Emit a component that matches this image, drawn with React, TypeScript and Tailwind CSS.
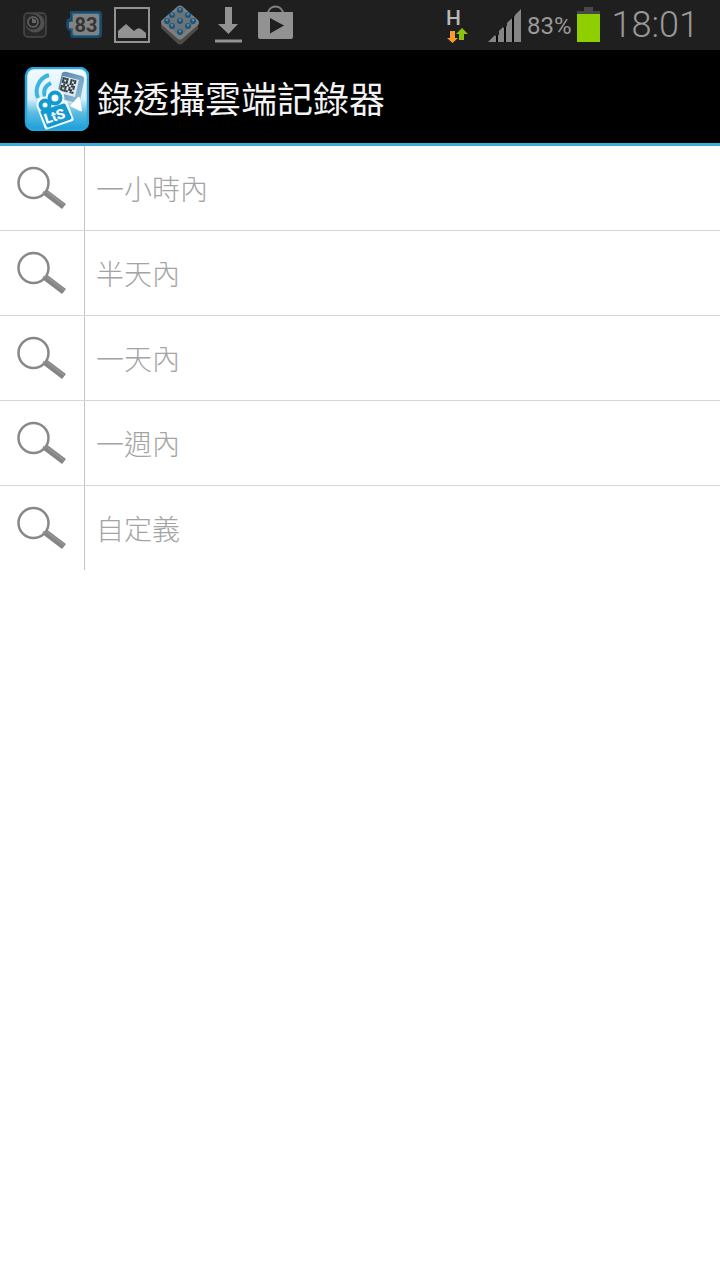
const ranges = ["一小時內", "半天內", "一天內", "一週內", "自定義"];

export default function App() {
  return (
    <div className="min-h-screen bg-white font-['Roboto','Noto_Sans_CJK_TC',sans-serif]">
      <StatusBar />
      <header className="flex h-24 items-center gap-2 border-b-3 border-[#3eaed8] bg-black pt-1 pl-6">
        <AppLogo />
        <h1 className="pt-1 text-4xl text-[#f3f3f3]">錄透攝雲端記錄器</h1>
      </header>
      <ul className="divide-y divide-[#d6d6d6]">
        {ranges.map((range) => (
          <li key={range}>
            <button type="button" className="flex h-[84px] w-full text-left">
              <span className="flex w-[85px] items-center border-r border-[#c4c4c4] pl-4">
                <SearchIcon />
              </span>
              <span className="self-center pt-1.5 pl-[11px] text-[28px] leading-10 font-light text-[#a4a4a4]">
                {range}
              </span>
            </button>
          </li>
        ))}
      </ul>
    </div>
  );
}

function StatusBar() {
  return (
    <div className="flex h-[50px] items-center justify-between bg-[#1f1f1f] pr-[21px] pl-5 text-[#999999]">
      <div className="flex items-center gap-2">
        <CameraIcon />
        <BatteryBadge />
        <PictureIcon />
        <TilesIcon />
        <DownloadIcon />
        <StoreIcon />
      </div>
      <div className="flex items-center">
        <NetworkIcon />
        <SignalIcon />
        <span className="ml-1 pt-0.5 text-2xl">83%</span>
        <BatteryIcon />
        <span className="ml-3 text-4xl font-light">18:01</span>
      </div>
    </div>
  );
}

function CameraIcon() {
  return (
    <svg width="36" height="40" viewBox="0 0 36 40" fill="none">
      <rect x="4" y="8" width="22" height="24" rx="4" fill="#282828" stroke="#4a4a4a" strokeWidth="1.5" />
      <circle cx="15" cy="18" r="9.5" fill="#505050" />
      <circle cx="13" cy="17" r="7.5" fill="#242424" />
      <circle cx="13" cy="17" r="5" fill="#262626" stroke="#5c5c5c" strokeWidth="2" />
      <path d="M12 13v5h4v-3z" fill="#686868" />
    </svg>
  );
}

function BatteryBadge() {
  return (
    <svg width="40" height="40" viewBox="0 0 40 40">
      <path d="M6 6h29q3 0 3 3v20q0 4-4 4H9q-3 0-3-4v-3Q2 25 2 19t4-6z" fill="#174b68" />
      <path d="M8 8h26q2 0 2 2v18q0 3-3 3H10q-2 0-2-3v-3Q5 25 5 20q0-4 3-4z" fill="#286887" />
      <path d="M11 9h22q2 0 2 2v17q0 2-2 2H12q-3 0-3-2v-5H5v-6h4v-6q0-2 2-2z" fill="#838383" />
      <text x="22" y="27" textAnchor="middle" fontSize="20" fontWeight="700" fill="#353535">
        83
      </text>
    </svg>
  );
}

function PictureIcon() {
  return (
    <svg width="40" height="40" viewBox="0 0 40 40">
      <rect x="3" y="3" width="34" height="34" fill="none" stroke="#929292" strokeWidth="2" />
      <path d="M6 33v-7l8-7 8 7q4-4 7-2l5 4v5z" fill="#929292" />
    </svg>
  );
}

const tileDots = [
  [20, 5], [12, 10], [28, 10], [7, 16], [33, 16],
  [12, 21], [28, 21], [20, 27], [20, 16],
];

function TilesIcon() {
  return (
    <svg width="40" height="40" viewBox="0 0 40 40">
      <path d="M1 18v5l17 16q2 1 4 0l16-15v-6z" fill="#4e4a47" />
      <path d="M18 1q2-1 4 0l16 14q2 3 0 5L22 34q-2 1-4 0L2 20q-2-3 0-5z" fill="#7b7f82" />
      <path d="M20 3L4 17l16 14 16-14z" fill="#6b7379" />
      {tileDots.map(([cx, cy]) => (
        <g key={`${cx}-${cy}`}>
          <circle cx={cx} cy={cy} r="3" fill="#1f5274" />
          <circle cx={cx} cy={cy - 1} r="1.5" fill="#4c86a6" />
        </g>
      ))}
    </svg>
  );
}

function DownloadIcon() {
  return (
    <svg width="40" height="40" viewBox="0 0 40 40" fill="#929292">
      <path d="M17 2h7v17h6L20.500 29 10 19h7z" />
      <path d="M7 34.500h27v3H7z" />
    </svg>
  );
}

function StoreIcon() {
  return (
    <svg width="40" height="40" viewBox="0 0 40 40">
      <path d="M12 9c0-10 15-10 15 0" fill="none" stroke="#808080" strokeWidth="2" />
      <path d="M2 7h35v25q0 2-2 2H4q-2 0-2-2z" fill="#929292" />
      <path d="M14 13l14 7.500-14 8z" fill="#1f1f1f" />
    </svg>
  );
}

function NetworkIcon() {
  return (
    <svg className="overflow-visible" width="40" height="40" viewBox="0 0 40 40">
      <text x="-1" y="20" fontSize="21" fontWeight="500" fill="#b8b8b8">
        H
      </text>
      <path d="M3 26h5v7h3l-5.500 5L0 33h3z" fill="#f79a32" />
      <path d="M12 35v-6H9l6-6 6 6h-4v6z" fill="#8ac40c" />
    </svg>
  );
}

function SignalIcon() {
  return (
    <svg width="36" height="40" viewBox="0 0 36 40">
      <path d="M1 37L34 4v33z" fill="#858585" />
      <path d="M9 20h2v17H9zM17 18h2v19h-2zM25 10h2v27h-2z" fill="#080808" />
      <path d="M8 19h4v11l-4 1zM16 17h4v4l-4 2zM24 9h4v2l-4 3z" fill="#1f1f1f" />
    </svg>
  );
}

function BatteryIcon() {
  return (
    <svg className="ml-1" width="24" height="40" viewBox="0 0 24 40">
      <path d="M8 2h9v4h7v4H1V6h7z" fill="#484848" />
      <path d="M1 9h23v28H1z" fill="#8fcf00" />
    </svg>
  );
}

const qrCells = [
  "1110111",
  "1010101",
  "1110110",
  "0101011",
  "1110101",
  "1010110",
  "1111011",
];

function AppLogo() {
  return (
    <svg width="65" height="64" viewBox="0 0 65 64">
      <defs>
        <linearGradient id="logo-sky" x1="0" y1="0" x2="0" y2="1">
          <stop offset="0" stopColor="#f4fbfe" />
          <stop offset="0.5" stopColor="#d8eff8" />
          <stop offset="0.72" stopColor="#5cbbe2" />
          <stop offset="1" stopColor="#1a9fd8" />
        </linearGradient>
        <linearGradient id="logo-phone" x1="0" y1="0" x2="1" y2="1">
          <stop offset="0" stopColor="#5b7fa6" />
          <stop offset="1" stopColor="#8fc4dd" />
        </linearGradient>
      </defs>
      <rect x="2" y="1" width="62" height="62" rx="8" fill="url(#logo-sky)" stroke="#25a7df" strokeWidth="2.500" />
      <g fill="none" stroke="#3fb3df" strokeWidth="4">
        <path d="M14 31C10 22 15 11 25 8" />
        <path d="M21 30c-2-6 0-11 6-14" />
      </g>
      <path d="M38 6q2-2 5-1l15 4q3 1 2 5l-4 20q-1 3-4 2l-17-5q-3-1-2-4z" fill="url(#logo-phone)" />
      <path d="M39 9l16 4-4 17-16-4z" fill="#dbe9ee" />
      <g transform="translate(39 10) rotate(14)">
        {qrCells.map((row, y) =>
          row.split("").map((cell, x) =>
            cell === "1" ? (
              <rect key={`${x}-${y}`} x={x * 2} y={y * 2} width="2" height="2" fill="#303a40" />
            ) : null
          )
        )}
      </g>
      <g fill="#139ad3" stroke="#f6fcfe" strokeWidth="5" strokeLinejoin="round">
        <circle cx="31" cy="31" r="7" />
        <circle cx="21" cy="38" r="6" />
        <path d="M17 44l24-8 6 16-24 8z" />
      </g>
      <g fill="#139ad3" stroke="#139ad3" strokeWidth="3" strokeLinejoin="round">
        <circle cx="31" cy="31" r="6" />
        <circle cx="21" cy="38" r="5" />
        <path d="M18 45l22-7 6 13-22 8z" />
      </g>
      <circle cx="31" cy="31" r="3.500" fill="#fff" />
      <circle cx="21" cy="38" r="2.500" fill="#fff" />
      <path d="M46 39l8-9q1-1 2 1l2 12q0 2-2 1z" fill="#fff" />
      <text x="22" y="57" fontSize="14" fontWeight="900" fill="#fff" transform="rotate(-18 22 57)">
        LtS
      </text>
    </svg>
  );
}

function SearchIcon() {
  return (
    <svg width="52" height="48" viewBox="0 0 52 48" fill="none">
      <circle cx="17.500" cy="19" r="15" stroke="#888888" strokeWidth="2.500" />
      <path d="M27 28l4 2" stroke="#909090" strokeWidth="3" />
      <path d="M29.500 28.500L48 42.500" stroke="#858585" strokeWidth="6.500" />
      <path d="M31 28l17 13" stroke="#989898" strokeWidth="1.500" />
    </svg>
  );
}
